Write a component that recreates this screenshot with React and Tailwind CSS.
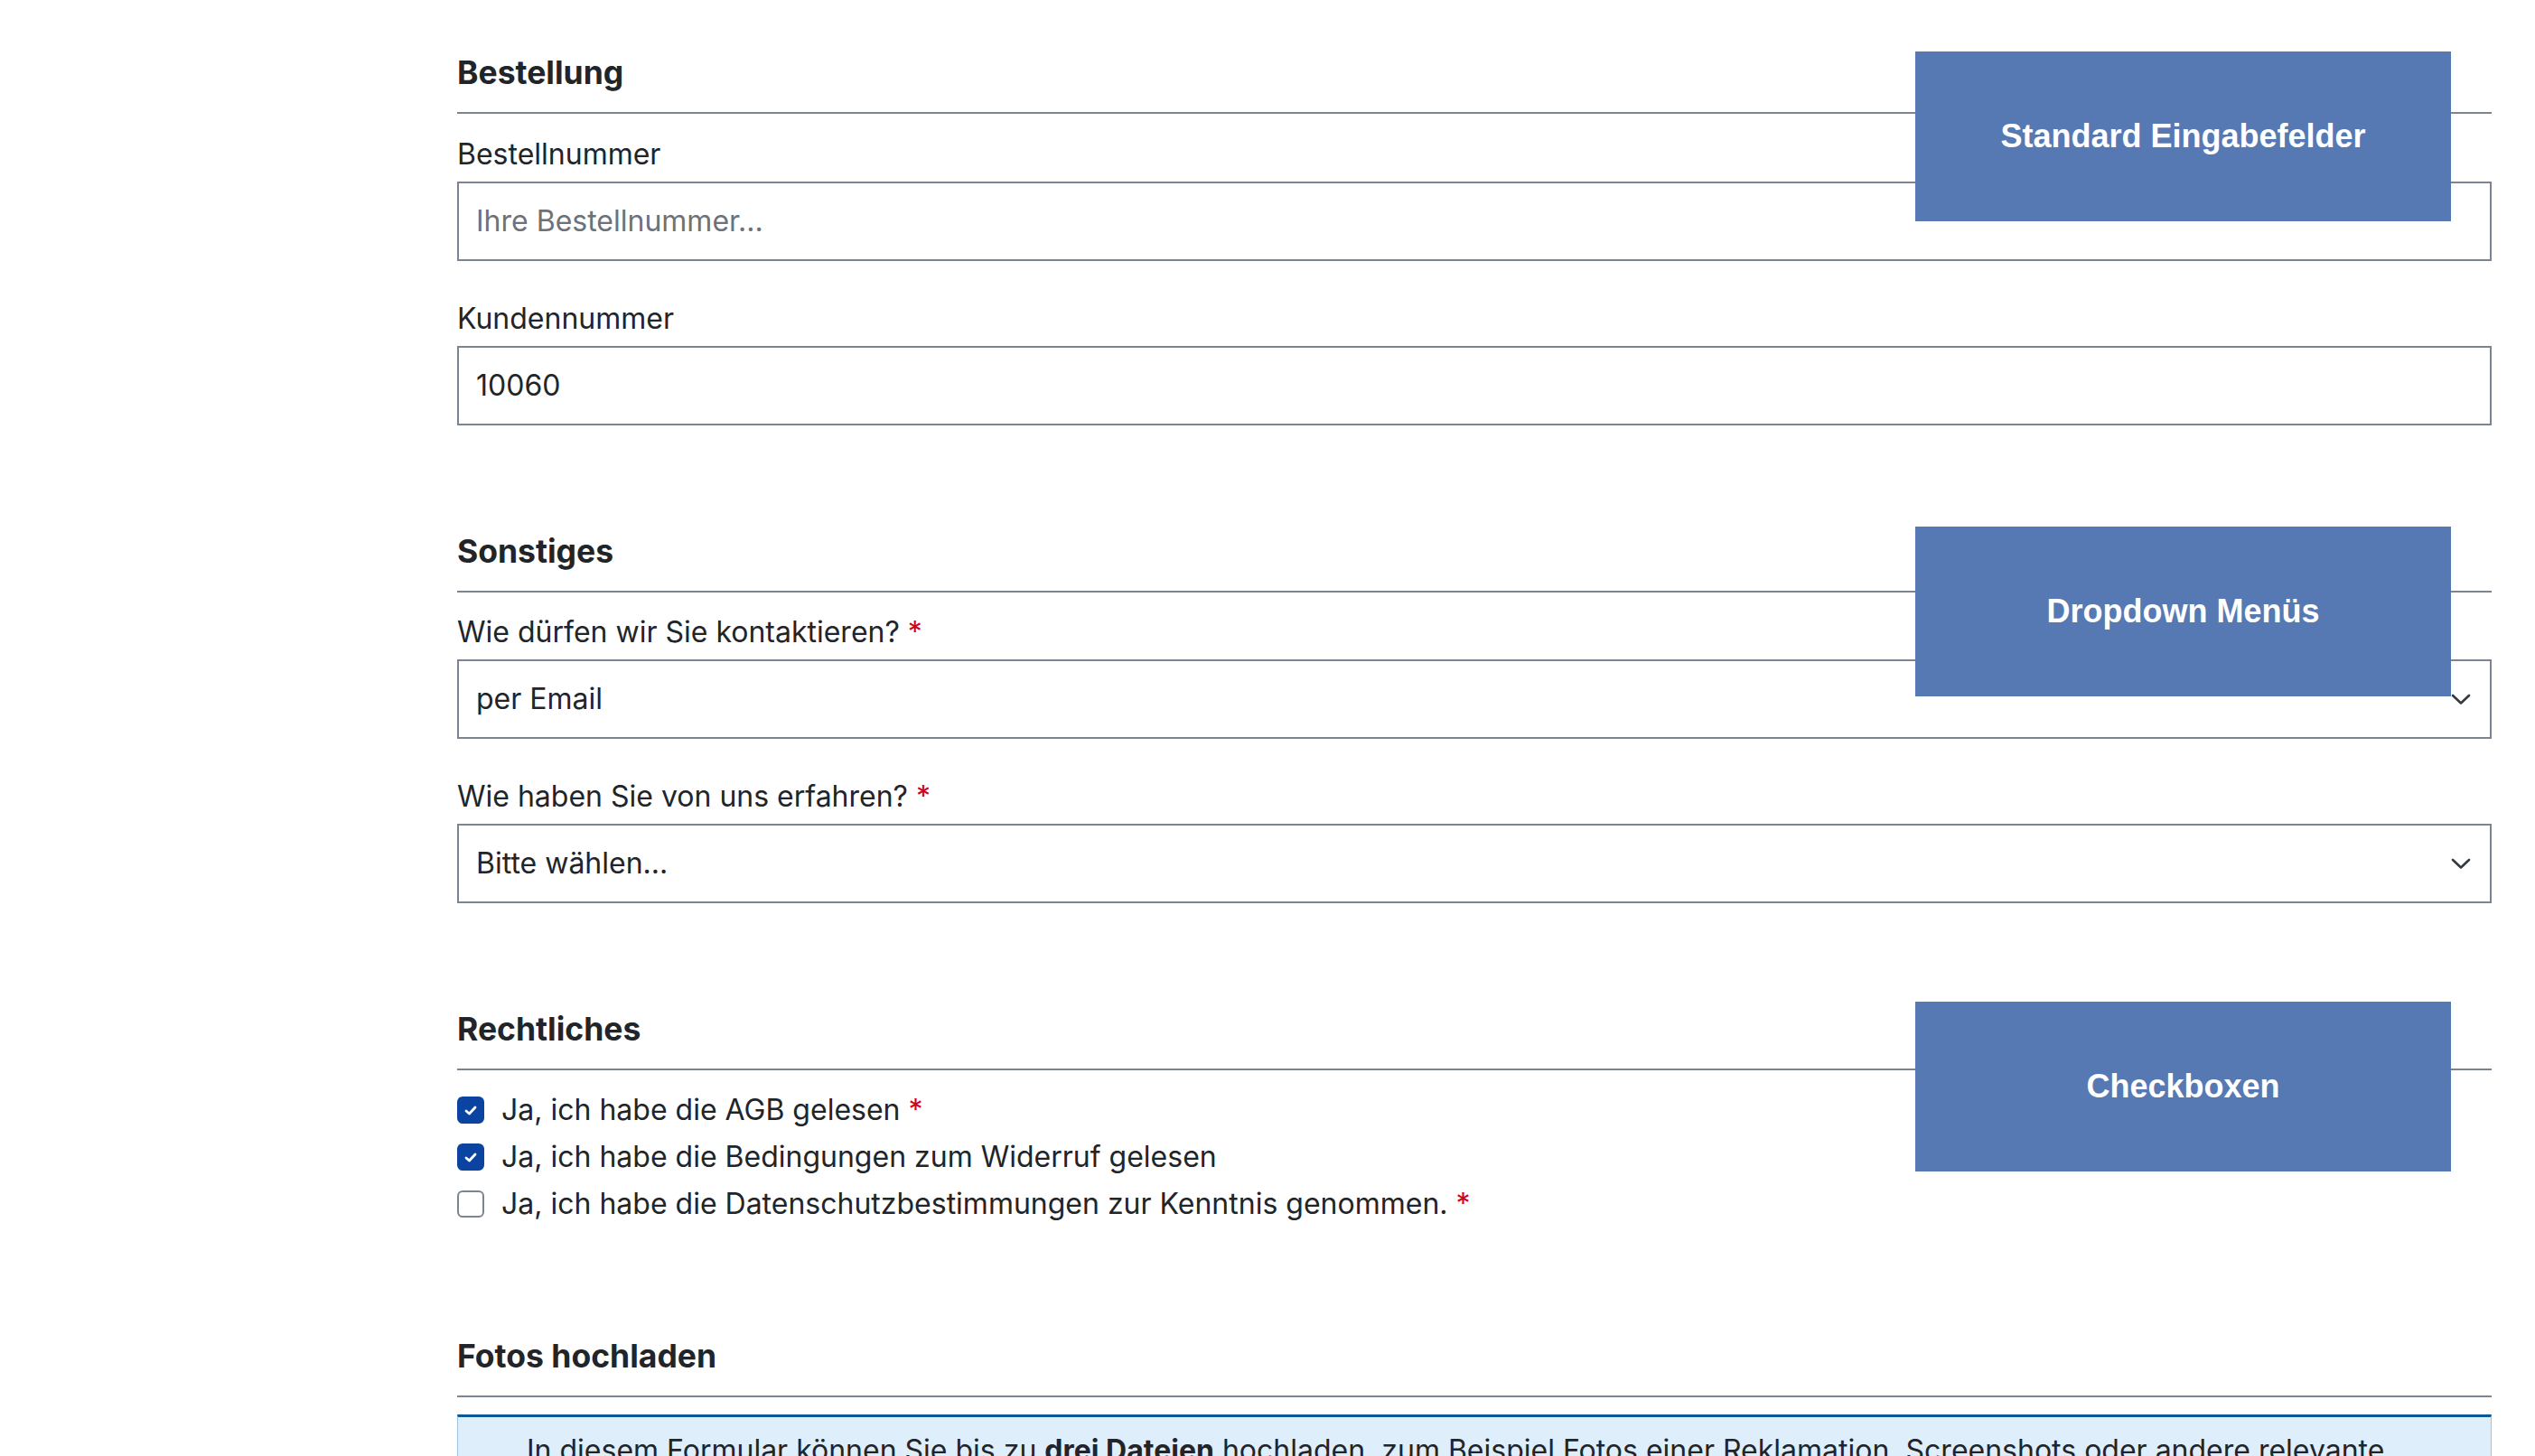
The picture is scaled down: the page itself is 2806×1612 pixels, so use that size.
import React from "react";

const Required = () => <span className="text-[#d0021b] ml-[9px]">*</span>;

const SectionTitle = ({ children }) => (
  <h2 className="text-[35.5px] leading-[38px] font-bold text-[#212529] pb-[24px] border-b-2 border-[#7b8591]">
    {children}
  </h2>
);

const Label = ({ children, required }) => (
  <label className="block text-[32px] leading-[45px] text-[#212529] mb-[8px]">
    {children}
    {required && <Required />}
  </label>
);

const TextField = ({ label, value, placeholder }) => (
  <div>
    <Label>{label}</Label>
    <div className="h-[88px] border-2 border-[#7b8591] bg-white flex items-center px-[19px] text-[32px]">
      {value ? (
        <span className="text-[#212529]">{value}</span>
      ) : (
        <span className="text-[#6c717a]">{placeholder}</span>
      )}
    </div>
  </div>
);

const SelectField = ({ label, value }) => (
  <div>
    <Label required>{label}</Label>
    <div className="h-[88px] border-2 border-[#7b8591] bg-white flex items-center justify-between pl-[19px] pr-[21px] text-[32px] text-[#212529]">
      <span>{value}</span>
      <svg width="22" height="13" viewBox="0 0 22 13" fill="none">
        <polyline
          points="2,2 11,10.5 20,2"
          stroke="#343a40"
          strokeWidth="2.6"
          strokeLinecap="round"
          strokeLinejoin="round"
        />
      </svg>
    </div>
  </div>
);

const Checkbox = ({ checked, children, required }) => (
  <div className="h-[52px] flex items-center gap-[19px] text-[32px] text-[#212529]">
    {checked ? (
      <span className="w-[30px] h-[30px] rounded-[6px] bg-[#0b44a0] flex items-center justify-center">
        <svg width="16" height="13" viewBox="0 0 16 13" fill="none">
          <polyline
            points="3,7 6.5,10 13,3"
            stroke="white"
            strokeWidth="2.8"
            strokeLinecap="round"
            strokeLinejoin="round"
          />
        </svg>
      </span>
    ) : (
      <span className="w-[30px] h-[30px] rounded-[6px] border-2 border-[#7b8591] bg-white"></span>
    )}
    <span>
      {children}
      {required && <Required />}
    </span>
  </div>
);

const Note = ({ top, children }) => (
  <div
    className={`absolute ${top} left-[2120px] w-[593px] h-[188px] bg-[#5679b3] flex items-center justify-center text-white font-bold text-[36px]`}
    style={{ fontFamily: '"Liberation Sans", Arial, sans-serif' }}
  >
    {children}
  </div>
);

const App = () => {
  return (
    <div
      className="relative min-h-screen bg-white pl-[506px] pr-[48px] pt-[62px] pb-[80px]"
      style={{ fontFamily: 'Inter, "Noto Sans", sans-serif' }}
    >
      <section>
        <SectionTitle>Bestellung</SectionTitle>
        <div className="mt-[22px] flex flex-col gap-[41px]">
          <TextField label="Bestellnummer" placeholder="Ihre Bestellnummer..." />
          <TextField label="Kundennummer" value="10060" />
        </div>
      </section>

      <section className="mt-[121px]">
        <SectionTitle>Sonstiges</SectionTitle>
        <div className="mt-[21px] flex flex-col gap-[41px]">
          <SelectField label="Wie dürfen wir Sie kontaktieren?" value="per Email" />
          <SelectField label="Wie haben Sie von uns erfahren?" value="Bitte wählen..." />
        </div>
      </section>

      <section className="mt-[121px]">
        <SectionTitle>Rechtliches</SectionTitle>
        <div className="mt-[18px]">
          <Checkbox checked required>
            Ja, ich habe die AGB gelesen
          </Checkbox>
          <Checkbox checked>Ja, ich habe die Bedingungen zum Widerruf gelesen</Checkbox>
          <Checkbox required>
            Ja, ich habe die Datenschutzbestimmungen zur Kenntnis genommen.
          </Checkbox>
        </div>
      </section>

      <section className="mt-[124px]">
        <SectionTitle>Fotos hochladen</SectionTitle>
        <div className="mt-[19px] bg-[#deeefb] border border-[#9fc3e3] border-t-[3px] border-t-[#0b5894] px-[76px] pt-[14px] pb-[20px]">
          <p className="text-[32px] leading-[45px] text-[#212529]">
            In diesem Formular können Sie bis zu <strong className="font-bold">drei Dateien</strong> hochladen,
            zum Beispiel Fotos einer Reklamation, Screenshots oder andere relevante Dokumente.
          </p>
        </div>
      </section>

      <Note top="top-[57px]">Standard Eingabefelder</Note>
      <Note top="top-[583px]">Dropdown Menüs</Note>
      <Note top="top-[1109px]">Checkboxen</Note>
    </div>
  );
};

export default App;
